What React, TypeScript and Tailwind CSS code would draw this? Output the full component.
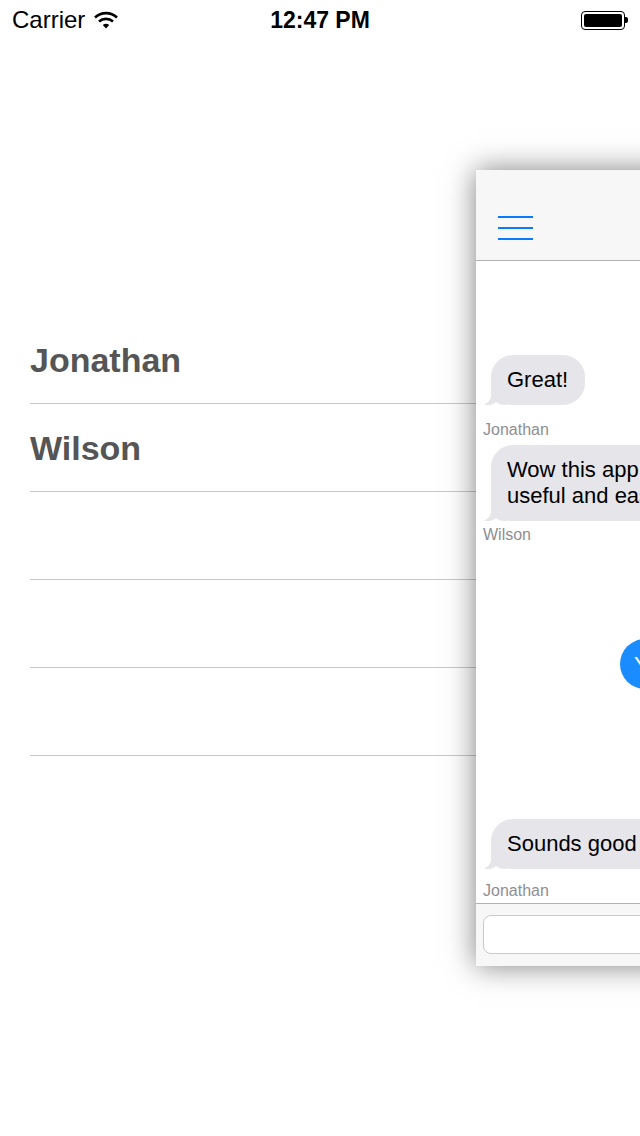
import React from "react";

const FONT = { fontFamily: '"Liberation Sans", Arial, sans-serif' };

function Wifi() {
  return (
    <svg width="24" height="18" viewBox="0 0 24 18" className="block">
      <path d="M1 6.5 A16 16 0 0 1 23 6.5" stroke="#000" strokeWidth="2.6" fill="none" />
      <path d="M5 10.5 A10.5 10.5 0 0 1 19 10.5" stroke="#000" strokeWidth="2.6" fill="none" />
      <path d="M8.8 14 A5 5 0 0 1 15.2 14 L12 17.5 Z" fill="#000" />
    </svg>
  );
}

function Battery() {
  return (
    <div className="flex items-center">
      <div className="w-[44px] h-[19px] rounded-[4px] border border-black p-[2px]">
        <div className="w-full h-full bg-black rounded-[2px]" />
      </div>
      <div className="w-[3px] h-[6px] bg-black rounded-r-[2px]" />
    </div>
  );
}

function Tail() {
  return (
    <svg width="24" height="24" viewBox="0 0 24 24" className="absolute -left-[8px] bottom-0">
      <path
        d="M8 0 L8 14 C8 19 5 22 0 24.5 C5 25 10 23.5 13 21 C15 23 18 24 22 24 L24 24 L24 0 Z"
        fill="#e5e5ea"
      />
    </svg>
  );
}

function GrayBubble({ lines }: { lines: string[] }) {
  return (
    <div className="relative ml-[15px] self-start">
      <Tail />
      <div className="relative bg-[#e5e5ea] rounded-[22px] pl-[16px] pr-[17px] py-[12px] text-[22px] leading-[26px] text-black whitespace-nowrap">
        {lines.map((l) => (
          <div key={l}>{l}</div>
        ))}
      </div>
    </div>
  );
}

function Label({ name, mt }: { name: string; mt: string }) {
  return (
    <div className={`ml-[7px] ${mt} text-[16px] leading-[20px] text-[#8e8e93]`}>{name}</div>
  );
}

export default function App() {
  const contacts = ["Jonathan", "Wilson", "", "", ""];

  return (
    <div className="relative w-[640px] h-[1136px] overflow-hidden bg-white" style={FONT}>
      {/* status bar */}
      <div className="relative h-[40px] flex items-center justify-between px-[12px]">
        <div className="flex items-center gap-[9px]">
          <span className="text-[24px] leading-none text-black">Carrier</span>
          <Wifi />
        </div>
        <span className="absolute left-0 right-0 text-center text-[23px] font-bold leading-none text-black">
          12:47 PM
        </span>
        <div className="mr-[0px]">
          <Battery />
        </div>
      </div>

      {/* menu list */}
      <div className="mt-[276px] ml-[30px]">
        {contacts.map((c, i) => (
          <div key={i} className="h-[88px] border-b border-[#c8c7cc] flex items-center">
            <span className="text-[34px] font-bold text-[#555555] leading-none">{c}</span>
          </div>
        ))}
      </div>

      {/* chat panel sliding over */}
      <div className="absolute left-[476px] top-[170px] w-[640px] h-[796px] flex flex-col bg-white shadow-[0_0_28px_rgba(0,0,0,0.5)]">
        <div className="h-[91px] shrink-0 bg-[#f7f7f7] border-b border-[#b2b2b2] pl-[22px] pt-[46px]">
          <div className="flex flex-col gap-[9px] w-[35px]">
            <div className="h-[2px] bg-[#0a7aff]" />
            <div className="h-[2px] bg-[#0a7aff]" />
            <div className="h-[2px] bg-[#0a7aff]" />
          </div>
        </div>

        <div className="flex-1 flex flex-col overflow-hidden">
          <div className="mt-[94px]" />
          <GrayBubble lines={["Great!"]} />
          <Label name="Jonathan" mt="mt-[15px]" />
          <div className="mt-[5px]" />
          <GrayBubble lines={["Wow this app is really", "useful and easy to use!"]} />
          <Label name="Wilson" mt="mt-[4px]" />
          <div className="mt-[94px] ml-[144px] self-start h-[50px] rounded-full bg-[#1a8cff] pl-[14px] pr-[18px] flex items-center text-[22px] text-white whitespace-nowrap">
            Yes, it works great!
          </div>
          <div className="mt-[130px]" />
          <GrayBubble lines={["Sounds good to me"]} />
          <Label name="Jonathan" mt="mt-[12px]" />
        </div>

        <div className="h-[63px] shrink-0 bg-[#f7f7f7] border-t border-[#b2b2b2] px-[7px] pt-[11px]">
          <div className="h-[39px] w-[540px] bg-white border border-[#c8c8cd] rounded-[8px]" />
        </div>
      </div>
    </div>
  );
}
